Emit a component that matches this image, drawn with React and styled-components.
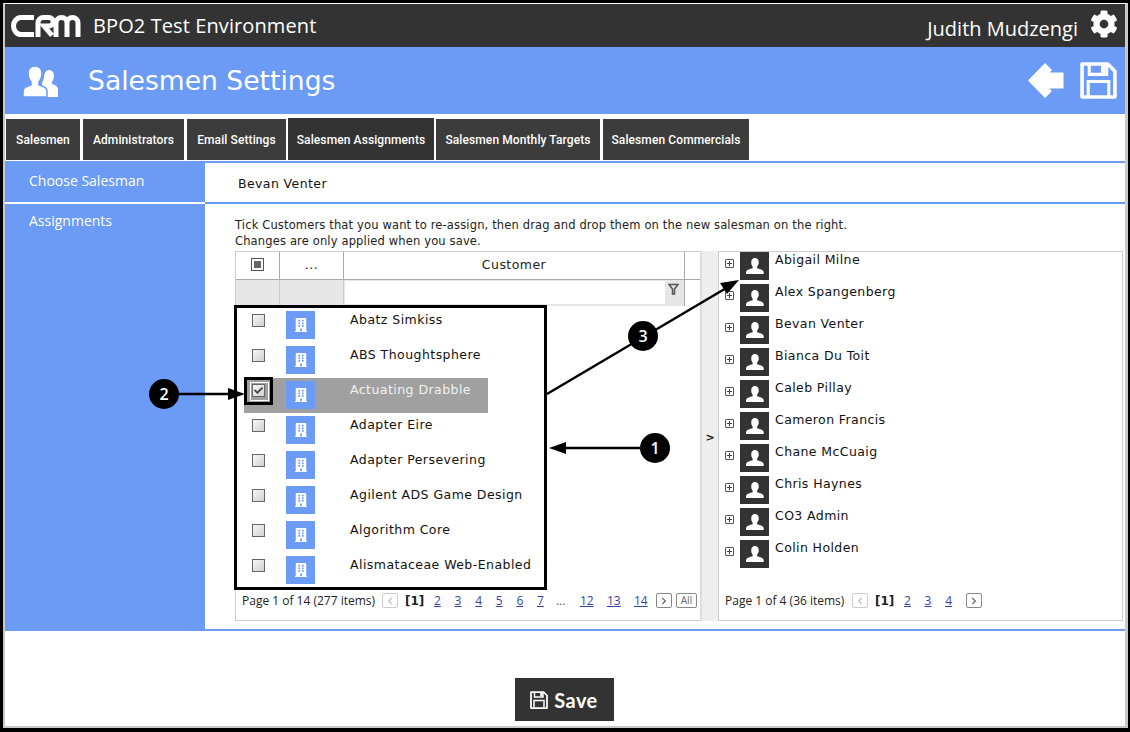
import React from 'react'
import styled, { createGlobalStyle } from 'styled-components'
import { FaCog, FaBuilding, FaCheck, FaChevronLeft, FaChevronRight } from 'react-icons/fa'

const GlobalStyle = createGlobalStyle`
  html, body { margin: 0; padding: 0; background: #fff; }
  * { box-sizing: border-box; }
`

const BLUE = '#6b9bf4'
const DARK = '#333333'
const UI = '"Open Sans", "Noto Sans", sans-serif'
const VERDANA = '"DejaVu Sans", Verdana, sans-serif'

const Frame = styled.div`
  position: relative;
  width: 1130px;
  height: 732px;
  overflow: hidden;
  background: #000;
  padding: 3px 2px 4px 3px;
`
const Page = styled.div`
  height: 100%;
  display: flex;
  flex-direction: column;
  background: #fff;
  border-left: 2px solid #c8c8c8;
  border-right: 3px solid #c8c8c8;
  border-bottom: 2px solid #c8c8c8;
  border-top: 1px solid #fff;
`
const TopBar = styled.header`
  height: 43px;
  flex: none;
  background: ${DARK};
  color: #fff;
  display: flex;
  align-items: center;
  padding: 0 7px 0 6px;
  font-family: ${UI};
  font-size: 20px;
`
const EnvName = styled.span`
  margin-left: 12px;
  letter-spacing: 0.1px;
`
const UserName = styled.span`
  margin-left: auto;
  margin-top: 6px;
  font-size: 20px;
`
const Gear = styled(FaCog)`
  margin-left: 12px;
  margin-top: -3px;
  font-size: 28px;
`
const TitleBar = styled.div`
  height: 67px;
  flex: none;
  background: ${BLUE};
  color: #fff;
  display: flex;
  align-items: center;
  padding: 0 8px 0 17px;
`
const PageTitle = styled.h1`
  margin: 0 0 0 30px;
  font-family: ${VERDANA};
  font-weight: 400;
  font-size: 26.6px;
`
const TitleActions = styled.div`
  margin-left: auto;
  display: flex;
  align-items: center;
  gap: 16px;
`
const Tabs = styled.nav`
  height: 49px;
  flex: none;
  display: flex;
  align-items: flex-end;
  padding: 0 0 1px 1px;
  border-bottom: 2px solid ${BLUE};
`
const Tab = styled.div`
  height: ${p => (p.$active ? '42px' : '41px')};
  width: ${p => p.$w}px;
  margin-left: ${p => p.$gap}px;
  background: ${p => (p.$active ? '#333' : '#3c3c3c')};
  color: #fff;
  display: flex;
  align-items: center;
  justify-content: center;
  padding-top: 1px;
  font-family: Roboto, "Open Sans", sans-serif;
  font-size: 12px;
  font-weight: 500;
  letter-spacing: 0.1px;
`
const Body = styled.div`
  height: 466px;
  flex: none;
  display: grid;
  grid-template-columns: 200px 1fr;
  grid-template-rows: 39px 1fr;
  row-gap: 2px;
`
const SideItem = styled.div`
  background: ${BLUE};
  color: #fff;
  padding: ${p => p.$pad}px 0 0 24px;
  font-family: ${UI};
  font-size: 14px;
`
const Chosen = styled.div`
  background: #fff;
  padding: 13px 0 0 33px;
  font-family: ${VERDANA};
  font-size: 12.5px;
  letter-spacing: 0.4px;
  color: #111;
  box-shadow: 0 2px 0 ${BLUE};
`
const Main = styled.div`
  padding: 13px 0 0 30px;
  display: flex;
  flex-direction: column;
  min-height: 0;
`
const Intro = styled.p`
  margin: 0 0 2px;
  font-family: ${VERDANA};
  font-size: 11.5px;
  letter-spacing: 0.15px;
  line-height: 16px;
  color: #222;
`
const Panels = styled.div`
  display: flex;
  height: 370px;
`
const GridPanel = styled.section`
  width: 466px;
  border: 1px solid #ccc;
  border-right-color: #ddd;
  display: flex;
  flex-direction: column;
`
const Columns = styled.div`
  display: grid;
  grid-template-columns: 44px 64px 341px;
  height: ${p => p.$h}px;
  flex: none;
  border-bottom: 1px solid ${p => p.$line || 'transparent'};
`
const HeadCell = styled.div`
  display: flex;
  align-items: center;
  justify-content: center;
  padding-bottom: 2px;
  border-right: 1px solid #aaa;
  font-family: ${VERDANA};
  font-size: 12.5px;
  letter-spacing: 0.45px;
  color: #222;
`
const FilterCell = styled.div`
  background: #e6e6e6;
  border-right: 1px solid #ccc;
`
const FilterBox = styled.div`
  position: relative;
  background: #e6e6e6;
  border-right: 1px solid #aaa;
  padding: 1px 19px 2px 1px;
`
const FilterInput = styled.div`
  height: 100%;
  background: #fff;
`
const FilterPin = styled.svg`
  position: absolute;
  top: 3px;
  right: 5px;
  width: 11px;
  height: 12px;
`
const AllBox = styled.div`
  width: 13px;
  height: 13px;
  border: 1px solid #555;
  background: #fff;
  padding: 2px;
  &::after { content: ''; display: block; width: 100%; height: 100%; background: #666; }
`
const Rows = styled.div`
  flex: 1;
  padding-top: 1px;
`
const Row = styled.div`
  position: relative;
  display: grid;
  grid-template-columns: 44px 64px 1fr;
  height: 35px;
  font-family: ${VERDANA};
  font-size: 12.5px;
  letter-spacing: 0.45px;
  color: ${p => (p.$on ? '#f2f2f2' : '#111')};
  &::before {
    content: '';
    display: ${p => (p.$on ? 'block' : 'none')};
    position: absolute;
    left: 8px;
    top: 0;
    width: 244px;
    height: 35px;
    background: #a0a0a0;
  }
`
const CheckCell = styled.div`
  position: relative;
  padding: 6px 0 0 16px;
`
const Check = styled.div`
  width: 13px;
  height: 13px;
  border: 1px solid #666;
  background: linear-gradient(135deg, #f8f8f8, #d0d0d0);
  display: flex;
  align-items: center;
  justify-content: center;
  color: #444;
  font-size: 9px;
`
const IconCell = styled.div`
  position: relative;
  padding: 3px 0 0 6px;
`
const BuildingTile = styled.div`
  width: 29px;
  height: 28px;
  background: ${BLUE};
  color: #fff;
  display: flex;
  align-items: center;
  justify-content: center;
  font-size: 14px;
`
const NameCell = styled.div`
  position: relative;
  padding: 4px 0 0 6px;
`
const Pager = styled.div`
  height: 32px;
  flex: none;
  display: flex;
  align-items: flex-start;
  padding: 5px 0 0 6px;
  font-family: ${UI};
  font-size: 12px;
  line-height: 16px;
  color: #222;
`
const PagerInfo = styled.span`
  width: ${p => p.$w}px;
  flex: none;
`
const PagerBtn = styled.span`
  width: ${p => p.$w || 16}px;
  height: 15px;
  flex: none;
  margin-left: ${p => p.$ml || 0}px;
  border: 1px solid ${p => (p.$off ? '#ccc' : '#888')};
  border-radius: 2px;
  color: ${p => (p.$off ? '#bbb' : '#666')};
  font-size: 10px;
  line-height: 13px;
  display: flex;
  align-items: center;
  justify-content: center;
`
const Current = styled.b`
  font-family: ${VERDANA};
  width: 19px;
  flex: none;
  margin-left: 7px;
  margin-right: 10px;
  color: #222;
  font-size: 12px;
`
const PageLink = styled.a`
  flex: none;
  width: ${p => p.$w}px;
  color: #3a3fa8;
  text-decoration: underline;
  font-size: 12px;
`
const Dots = styled.span`
  flex: none;
  width: 24px;
  color: #555;
`
const Splitter = styled.div`
  width: 17px;
  background: #eee;
  border-left: 1px solid #ddd;
  display: flex;
  align-items: center;
  justify-content: center;
  font-family: ${VERDANA};
  font-weight: 700;
  font-size: 11px;
  color: #222;
  padding-top: 3px;
`
const TreePanel = styled.section`
  width: 405px;
  border: 1px solid #ccc;
  display: flex;
  flex-direction: column;
`
const Tree = styled.div`
  flex: 1;
`
const TreeRow = styled.div`
  display: flex;
  height: 32px;
  padding-left: 6px;
  font-family: ${VERDANA};
  font-size: 12.5px;
  letter-spacing: 0.4px;
  color: #111;
`
const Expander = styled.span`
  width: 9px;
  height: 9px;
  margin-top: 7px;
  border: 1px solid #555;
  border-radius: 1px;
  flex: none;
  background:
    linear-gradient(#444, #444) center / 5px 1px no-repeat,
    linear-gradient(#444, #444) center / 1px 5px no-repeat;
`
const Avatar = styled.div`
  width: 29px;
  height: 28px;
  margin-left: 6px;
  flex: none;
  background: ${DARK};
  display: flex;
  align-items: center;
  justify-content: center;
`
const TreeName = styled.span`
  margin-left: 6px;
`
const Footer = styled.div`
  flex: 1;
  display: flex;
  justify-content: center;
  align-items: flex-start;
  border-top: 2px solid ${BLUE};
  padding: 47px 2px 0 0;
`
const SaveButton = styled.button`
  width: 99px;
  height: 43px;
  border: none;
  background: ${DARK};
  color: #fff;
  display: flex;
  align-items: center;
  justify-content: center;
  gap: 6px;
  font-family: "Lato", "Open Sans", sans-serif;
  font-size: 20px;
  font-weight: 700;
  letter-spacing: 0.4px;
`
const Callouts = styled.svg`
  position: absolute;
  left: 0;
  top: 0;
  width: 1130px;
  height: 732px;
  pointer-events: none;
`
const CalloutNumber = styled.div`
  position: absolute;
  left: ${p => p.$x}px;
  top: ${p => p.$y}px;
  width: 30px;
  height: 30px;
  border-radius: 50%;
  background: #000;
  color: #fff;
  display: flex;
  align-items: center;
  justify-content: center;
  font-family: ${UI};
  font-size: 16px;
  font-weight: 600;
`

const UsersIcon = () => (
  <svg width="36" height="32" viewBox="0 0 36 32" fill="#fff">
    <path d="M27 5c3 0 5 2.500 5 6 0 2.500-1 4.500-2 6v2c3 1 6 2.500 6 5v8H20v-14l2-5c0-5 2-8 5-8z" />
    <path
      d="M13 1c4.500 0 7 3 7 8 0 3.500-1.300 6-3 8v3c4 1 8 2.500 8 6v6H1v-6c0-3.500 4-5 8-6v-3c-1.700-2-3-4.500-3-8 0-5 2.500-8 7-8z"
      stroke="#6b9bf4"
      strokeWidth="1.500"
    />
  </svg>
)

const PersonIcon = () => (
  <svg width="18" height="16" viewBox="0 0 19 17" fill="#fff">
    <path d="M9.500 0c2.600 0 4 2 4 4.500 0 2-.8 3.600-1.800 4.700v1.600c2.500.6 7 1.800 7 4.200v2H0v-2c0-2.400 4.500-3.600 7-4.200V9.200C6 8.100 5.500 6.500 5.500 4.500 5.500 2 6.900 0 9.500 0z" />
  </svg>
)

const BackArrow = () => (
  <svg width="36" height="36" viewBox="0 0 36 36" fill="#fff">
    <path d="M0 17.500L17 0l7 7-2.500 2.500H35.500v16H21.500L24 28l-7 7z" />
  </svg>
)

const Floppy = ({ size }) => (
  <svg width={size} height={size} viewBox="0 0 36 36" fill="none" stroke="#fff" strokeWidth="3.500">
    <path d="M2 2h25l7 7v25H2z" strokeLinejoin="round" />
    <path d="M9 2v10h17V2" strokeWidth="3" />
    <path d="M21 3v7h3V3z" fill="#fff" strokeWidth="1" />
    <path d="M8 33V19h20v14" strokeWidth="3" />
  </svg>
)

const Logo = () => (
  <svg width="70" height="24" viewBox="0 0 70 24" fill="none" stroke="#fff" strokeWidth="5">
    <path d="M23 3.500H10a7.500 8.500 0 0 0 0 17h13" />
    <path d="M27 23V9a5.500 5.500 0 0 1 5.500-5.500H38a4 4 0 0 1 0 8.500h-5l8 9.500" />
    <path d="M45 23V9a5.500 5.500 0 0 1 11 0v14M56 9a5.500 5.500 0 0 1 11 0v14" />
  </svg>
)

const customers = [
  'Abatz Simkiss',
  'ABS Thoughtsphere',
  'Actuating Drabble',
  'Adapter Eire',
  'Adapter Persevering',
  'Agilent ADS Game Design',
  'Algorithm Core',
  'Alismataceae Web-Enabled',
]
const salesmen = [
  'Abigail Milne',
  'Alex Spangenberg',
  'Bevan Venter',
  'Bianca Du Toit',
  'Caleb Pillay',
  'Cameron Francis',
  'Chane McCuaig',
  'Chris Haynes',
  'CO3 Admin',
  'Colin Holden',
]
const tabs = [
  ['Salesmen', 74, 0],
  ['Administrators', 101, 3],
  ['Email Settings', 99, 3],
  ['Salesmen Assignments', 146, 2],
  ['Salesmen Monthly Targets', 164, 2],
  ['Salesmen Commercials', 146, 3],
]

export default function App() {
  return (
    <Frame>
      <GlobalStyle />
      <Page>
        <TopBar>
          <Logo />
          <EnvName>BPO2 Test Environment</EnvName>
          <UserName>Judith Mudzengi</UserName>
          <Gear />
        </TopBar>
        <TitleBar>
          <UsersIcon />
          <PageTitle>Salesmen Settings</PageTitle>
          <TitleActions>
            <BackArrow />
            <Floppy size={37} />
          </TitleActions>
        </TitleBar>
        <Tabs>
          {tabs.map(([label, w, gap]) => (
            <Tab key={label} $w={w} $gap={gap} $active={label === 'Salesmen Assignments'}>{label}</Tab>
          ))}
        </Tabs>
        <Body>
          <SideItem $pad={8}>Choose Salesman</SideItem>
          <Chosen>Bevan Venter</Chosen>
          <SideItem $pad={7}>Assignments</SideItem>
          <Main>
            <Intro>
              Tick Customers that you want to re-assign, then drag and drop them on the new salesman on the right.
              <br />
              Changes are only applied when you save.
            </Intro>
            <Panels>
              <GridPanel>
                <Columns $h={28} $line="#aaa">
                  <HeadCell><AllBox /></HeadCell>
                  <HeadCell>...</HeadCell>
                  <HeadCell>Customer</HeadCell>
                </Columns>
                <Columns $h={27}>
                  <FilterCell />
                  <FilterCell />
                  <FilterBox>
                    <FilterInput />
                    <FilterPin viewBox="0 0 11 12" fill="none" stroke="#555" strokeWidth="1.500">
                      <path d="M1 1.500h9L6.500 6v5h-2V6z" />
                    </FilterPin>
                  </FilterBox>
                </Columns>
                <Rows>
                  {customers.map(name => {
                    const on = name === 'Actuating Drabble'
                    return (
                      <Row key={name} $on={on}>
                        <CheckCell>
                          <Check>{on && <FaCheck />}</Check>
                        </CheckCell>
                        <IconCell>
                          <BuildingTile><FaBuilding /></BuildingTile>
                        </IconCell>
                        <NameCell>{name}</NameCell>
                      </Row>
                    )
                  })}
                </Rows>
                <Pager>
                  <PagerInfo $w={140}>Page 1 of 14 (277 items)</PagerInfo>
                  <PagerBtn $off><FaChevronLeft size={8} /></PagerBtn>
                  <Current>[1]</Current>
                  {[2, 3, 4, 5, 6].map(n => (
                    <PageLink key={n} href="#" $w={20.6}>{n}</PageLink>
                  ))}
                  <PageLink href="#" $w={19}>7</PageLink>
                  <Dots>...</Dots>
                  <PageLink href="#" $w={27}>12</PageLink>
                  <PageLink href="#" $w={27}>13</PageLink>
                  <PageLink href="#" $w={22}>14</PageLink>
                  <PagerBtn><FaChevronRight size={8} /></PagerBtn>
                  <PagerBtn $w={21} $ml={4}>All</PagerBtn>
                </Pager>
              </GridPanel>
              <Splitter>&gt;</Splitter>
              <TreePanel>
                <Tree>
                  {salesmen.map(name => (
                    <TreeRow key={name}>
                      <Expander />
                      <Avatar><PersonIcon /></Avatar>
                      <TreeName>{name}</TreeName>
                    </TreeRow>
                  ))}
                </Tree>
                <Pager>
                  <PagerInfo $w={127}>Page 1 of 4 (36 items)</PagerInfo>
                  <PagerBtn $off><FaChevronLeft size={8} /></PagerBtn>
                  <Current>[1]</Current>
                  {[2, 3, 4].map(n => (
                    <PageLink key={n} href="#" $w={20.6}>{n}</PageLink>
                  ))}
                  <PagerBtn><FaChevronRight size={8} /></PagerBtn>
                </Pager>
              </TreePanel>
            </Panels>
          </Main>
        </Body>
        <Footer>
          <SaveButton><Floppy size={18} />Save</SaveButton>
        </Footer>
      </Page>

      <Callouts viewBox="0 0 1130 732">
        <rect x="235.500" y="306.500" width="310" height="282" fill="none" stroke="#000" strokeWidth="3" />
        <rect x="245.500" y="378.500" width="26" height="25" fill="none" stroke="#000" strokeWidth="3" />
        <rect x="250.500" y="382.500" width="18" height="18" fill="none" stroke="#fff" />
        <path d="M640 448H564" stroke="#000" strokeWidth="2.500" />
        <path d="M549 448l17-6v12z" fill="#000" />
        <path d="M178 394h54" stroke="#000" strokeWidth="2.500" />
        <path d="M245 394l-17-6v12z" fill="#000" />
        <path d="M547 394L728 287" stroke="#000" strokeWidth="2.500" />
        <path d="M739 280l-19 3 7 11z" fill="#000" />
      </Callouts>
      <CalloutNumber $x={640} $y={433}>1</CalloutNumber>
      <CalloutNumber $x={149} $y={379}>2</CalloutNumber>
      <CalloutNumber $x={628} $y={321}>3</CalloutNumber>
    </Frame>
  )
}
